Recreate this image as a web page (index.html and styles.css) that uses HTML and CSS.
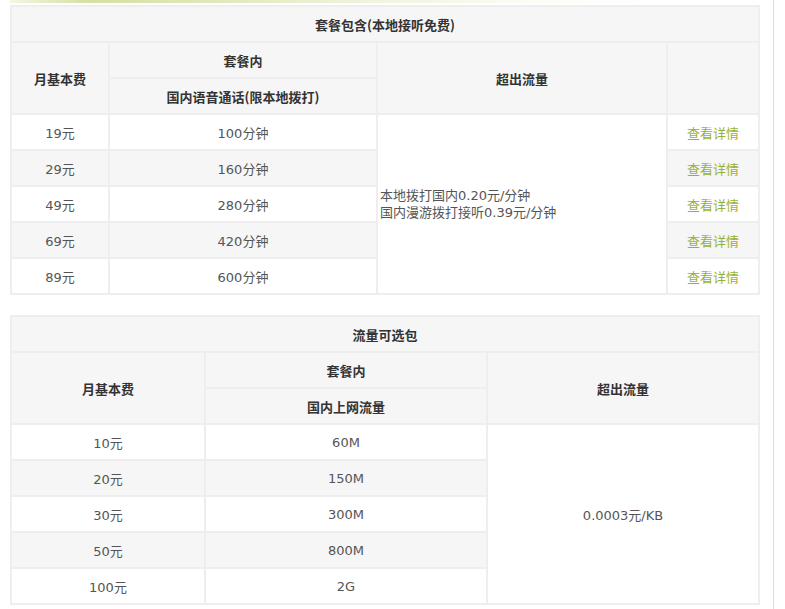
FILE: index.html
```html
<!DOCTYPE html>
<html lang="zh-CN">
<head>
<meta charset="utf-8">
<title>套餐</title>
<link rel="stylesheet" href="styles.css">
</head>
<body>
<div class="page">
  <div class="main">
    <div class="strip"></div>
    <table class="tbl t1">
      <colgroup><col class="c1a"><col class="c1b"><col class="c1c"><col class="c1d"></colgroup>
      <tr class="hd"><th colspan="4">套餐包含(本地接听免费)</th></tr>
      <tr class="hd"><th rowspan="2">月基本费</th><th>套餐内</th><th rowspan="2">超出流量</th><th rowspan="2"></th></tr>
      <tr class="hd"><th>国内语音通话(限本地拨打)</th></tr>
      <tr class="odd"><td>19元</td><td>100分钟</td><td rowspan="5" class="over">本地拨打国内0.20元/分钟<br>国内漫游拨打接听0.39元/分钟</td><td><a href="#">查看详情</a></td></tr>
      <tr class="even"><td>29元</td><td>160分钟</td><td><a href="#">查看详情</a></td></tr>
      <tr class="odd"><td>49元</td><td>280分钟</td><td><a href="#">查看详情</a></td></tr>
      <tr class="even"><td>69元</td><td>420分钟</td><td><a href="#">查看详情</a></td></tr>
      <tr class="odd"><td>89元</td><td>600分钟</td><td><a href="#">查看详情</a></td></tr>
    </table>
    <table class="tbl t2">
      <colgroup><col class="c2a"><col class="c2b"><col class="c2c"></colgroup>
      <tr class="hd"><th colspan="3">流量可选包</th></tr>
      <tr class="hd"><th rowspan="2">月基本费</th><th>套餐内</th><th rowspan="2">超出流量</th></tr>
      <tr class="hd"><th>国内上网流量</th></tr>
      <tr class="odd"><td>10元</td><td>60M</td><td rowspan="5" class="center">0.0003元/KB</td></tr>
      <tr class="even"><td>20元</td><td>150M</td></tr>
      <tr class="odd"><td>30元</td><td>300M</td></tr>
      <tr class="even"><td>50元</td><td>800M</td></tr>
      <tr class="odd"><td>100元</td><td>2G</td></tr>
    </table>
  </div>
  <div class="rule"></div>
</div>
</body>
</html>
```
FILE: styles.css
```css
html, body {
  margin: 0;
  padding: 0;
  background: #fff;
}
body {
  font-family: "DejaVu Sans", "Noto Sans CJK SC", sans-serif;
  font-size: 13px;
  color: #555;
}
.page {
  display: flex;
  height: 609px;
  overflow: hidden;
}
.main {
  width: 773px;
  padding-left: 10px;
  box-sizing: border-box;
}
.strip {
  height: 3px;
  margin-bottom: 2px;
  width: 640px;
  background: linear-gradient(to right, #f4f6e4 0%, #d4e0a4 12%, #dfe7b8 30%, #f0f3dc 55%, #fbfcf4 80%, #fff 100%);
}
.rule {
  width: 1px;
  background: #dcdcdc;
  height: 100%;
}
.tbl {
  border-collapse: collapse;
  width: 748px;
  table-layout: fixed;
  border: 2px solid #eeeeee;
}
.t2 {
  margin-top: 20px;
}
.tbl th, .tbl td {
  border: 2px solid #eeeeee;
  padding: 0;
  height: 34px;
  text-align: center;
  vertical-align: middle;
}
.tbl th {
  background: #f6f6f6;
  color: #333;
  font-weight: bold;
  font-family: "Noto Sans CJK SC", sans-serif;
  font-size: 13px;
}
.tbl tr.odd td { background: #fff; }
.tbl tr.even td { background: #f6f6f6; }
.tbl td.over, .tbl td.center { background: #fff; }
.tbl td.over {
  text-align: left;
  line-height: 17px;
  padding-left: 2px;
}
.tbl a {
  color: #96b236;
  text-decoration: none;
  font-family: "Noto Sans CJK SC", sans-serif;
}
.c1a { width: 98px; }
.c1b { width: 268px; }
.c1c { width: 290px; }
.c1d { width: 92px; }
.c2a { width: 194px; }
.c2b { width: 282px; }
.c2c { width: 272px; }
```
